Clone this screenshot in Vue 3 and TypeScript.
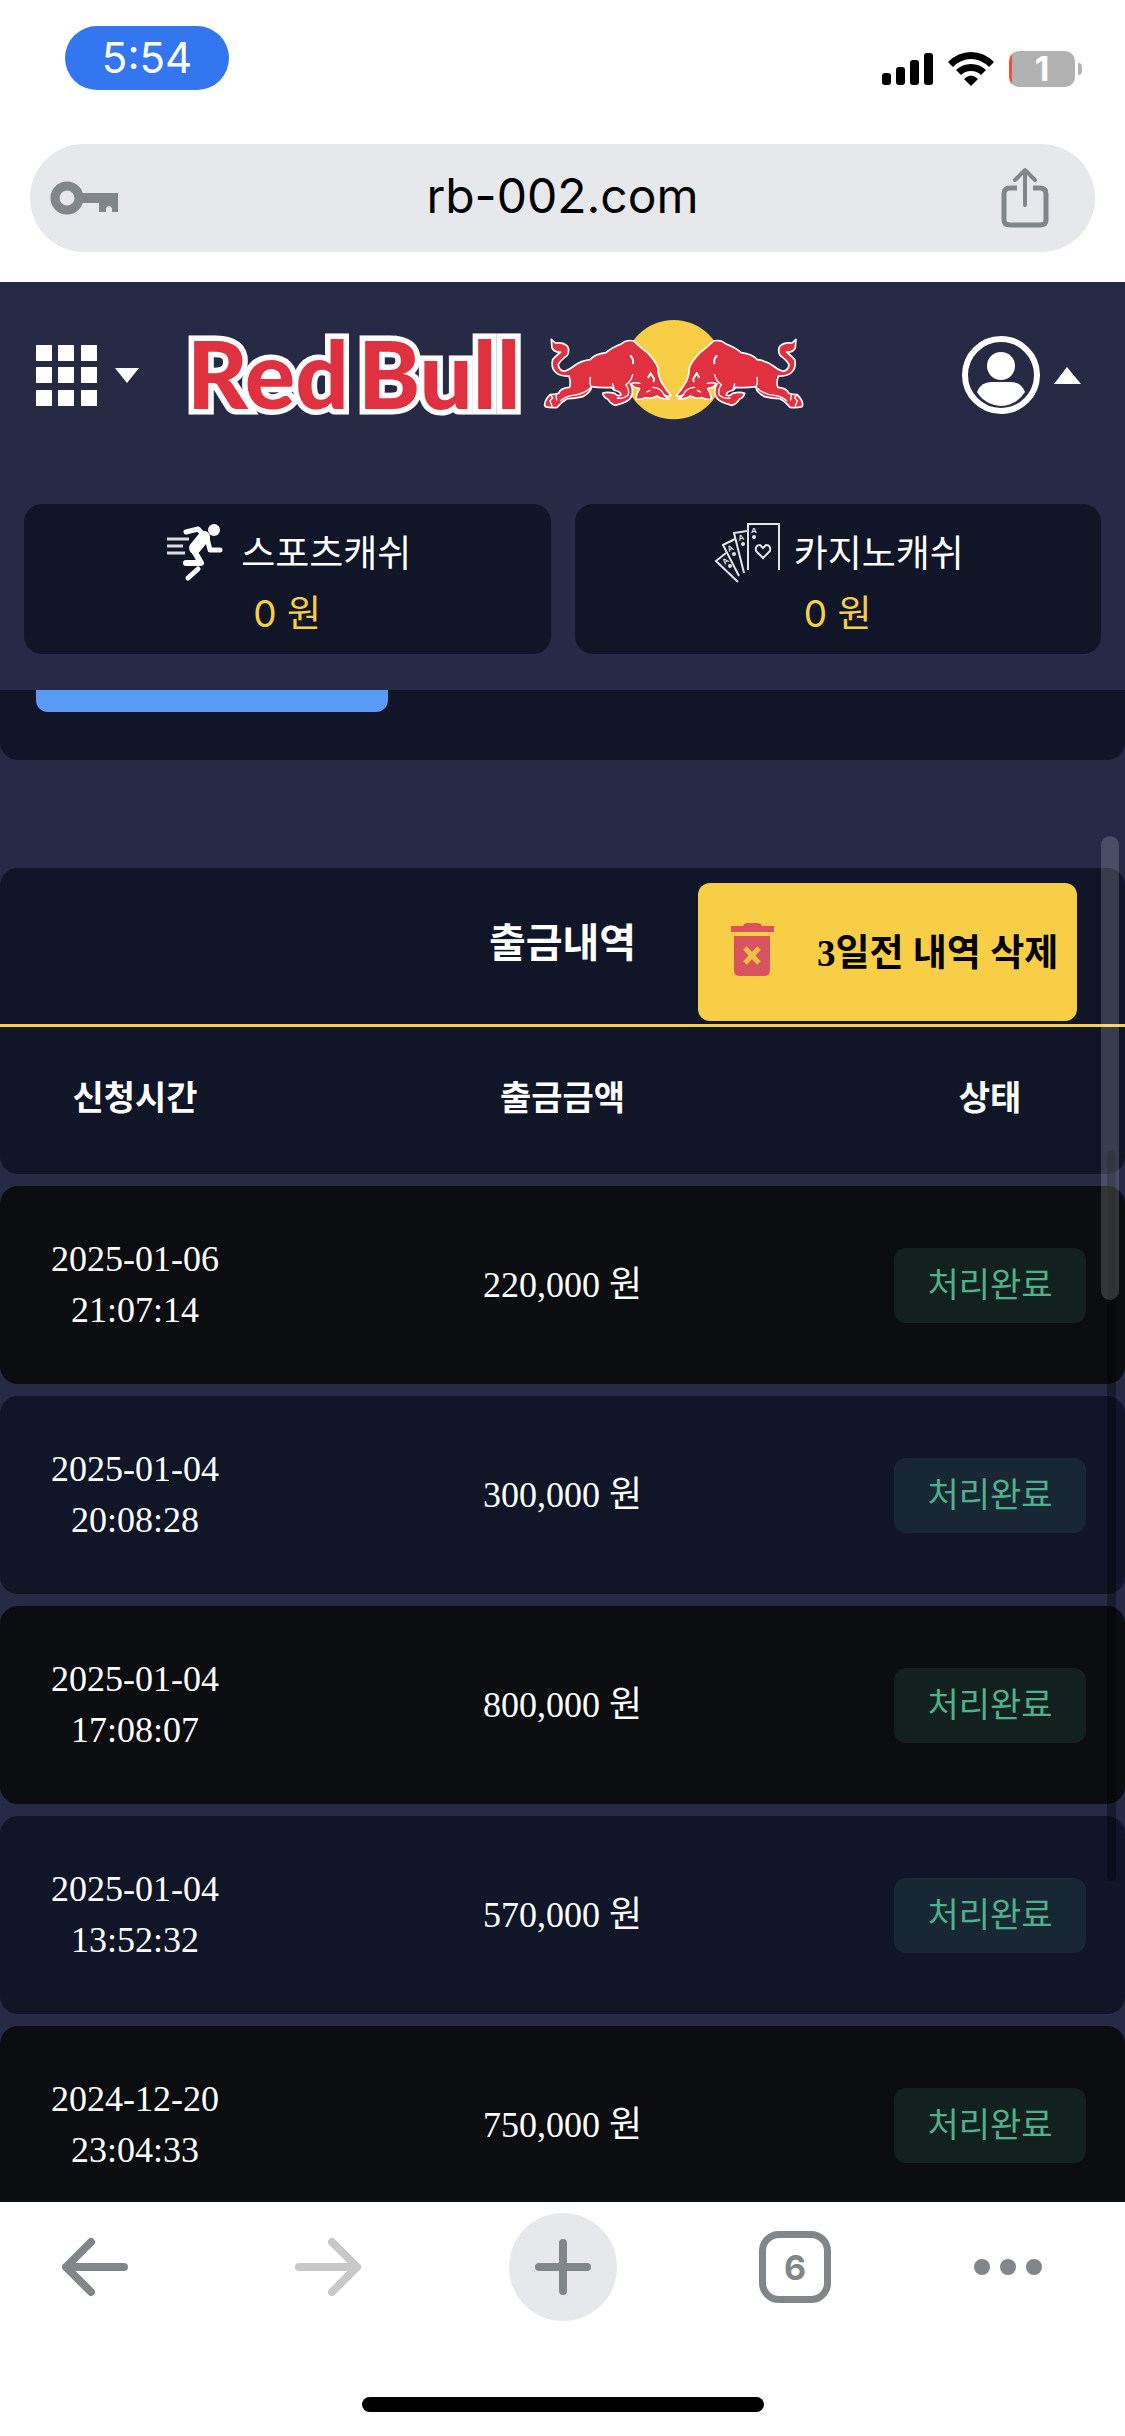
<script setup lang="ts">
interface Withdrawal {
  date: string
  time: string
  amount: string
  status: string
}

const url = 'rb-002.com'
const openTabs = 6
const battery = 1

const withdrawals: Withdrawal[] = [
  { date: '2025-01-06', time: '21:07:14', amount: '220,000 원', status: '처리완료' },
  { date: '2025-01-04', time: '20:08:28', amount: '300,000 원', status: '처리완료' },
  { date: '2025-01-04', time: '17:08:07', amount: '800,000 원', status: '처리완료' },
  { date: '2025-01-04', time: '13:52:32', amount: '570,000 원', status: '처리완료' },
  { date: '2024-12-20', time: '23:04:33', amount: '750,000 원', status: '처리완료' },
]

const bullBody =
  'M64 118 L76 129 Q100 126 112 138 Q120 150 112 166 Q92 180 85 194 Q86 212 104 214 Q120 208 132 198 Q150 183 180 179 Q195 162 228 158 Q246 142 275 131 Q290 118 311 123 Q326 138 352 158 Q376 182 384 204 Q384 232 398 252 Q406 268 423 286 Q414 293 402 284 Q408 292 417 297 Q392 298 381 288 Q366 298 346 293 Q330 300 319 297 Q317 286 329 266 L314 262 L302 252 Q312 272 304 290 Q298 306 256 316 Q242 312 234 298 Q222 294 218 280 Q232 274 254 280 Q262 290 272 286 Q276 276 252 270 Q246 266 246 262 Q214 264 184 260 Q184 276 158 290 Q130 297 112 296 Q96 304 82 322 Q62 324 46 320 Q38 308 60 284 Q76 284 86 280 Q90 264 118 262 Q124 252 117 228 Q90 230 76 216 Q62 202 68 178 Q78 168 92 156 Q74 158 66 144 Z'
</script>

<template>
  <div class="phone">
    <header class="status">
      <span class="clock">5:54</span>
      <div class="signals">
        <svg width="52" height="32" viewBox="0 0 52 32" aria-hidden="true">
          <rect x="0" y="20" width="9" height="12" rx="3" />
          <rect x="14" y="14" width="9" height="18" rx="3" />
          <rect x="28" y="7" width="9" height="25" rx="3" />
          <rect x="42" y="0" width="9" height="32" rx="3" />
        </svg>
        <svg class="wifi" width="46" height="34" viewBox="0 0 46 34" aria-hidden="true">
          <path d="M0 10 Q10 0 23 0 Q36 0 46 10 L41 15 Q33 7 23 7 Q13 7 5 15Z" />
          <path d="M8 18 Q14 12 23 12 Q32 12 38 18 L33 23 Q29 19 23 19 Q17 19 13 23Z" />
          <path d="M16 27 Q23 20 30 27 L23 34Z" />
        </svg>
        <div class="battery">{{ battery }}</div>
        <span class="nub"></span>
      </div>
    </header>

    <div class="address">
      <button class="key" aria-label="비밀번호">
        <svg width="68" height="34" viewBox="0 0 68 34" aria-hidden="true">
          <circle cx="17" cy="17" r="12" fill="none" stroke="#81868a" stroke-width="9" />
          <path d="M32 12H68V31H62V27Q59 23 56 27V31H49V22H32Z" fill="#81868a" />
        </svg>
      </button>
      <input class="url" type="text" :value="url" aria-label="주소" readonly />
      <button class="share" aria-label="공유">
        <svg width="48" height="62" viewBox="0 0 48 62" fill="none" stroke="#81868a" stroke-width="5" aria-hidden="true">
          <path d="M16 21H9Q3 21 3 27V53Q3 58 9 58H39Q45 58 45 53V27Q45 21 39 21H32" />
          <path d="M24 38V3M14 13L24 3L34 13" stroke-width="4" stroke-linecap="round" stroke-linejoin="round" />
        </svg>
      </button>
    </div>

    <main class="page">
      <div class="masthead">
        <nav class="topbar">
          <button class="menu" aria-label="메뉴">
            <svg width="61" height="61" viewBox="0 0 61 61" fill="#fff" aria-hidden="true">
              <path d="M0 0h16v16H0zM22 0h16v16H22zM45 0h16v16H45zM0 22h16v16H0zM22 22h16v16H22zM45 22h16v16H45zM0 45h16v16H0zM22 45h16v16H22zM45 45h16v16H45z" />
            </svg>
            <svg width="24" height="15" viewBox="0 0 24 15" aria-hidden="true"><path d="M0 0H24L12 15Z" fill="#fff" /></svg>
          </button>
          <a class="logo" href="#" aria-label="Red Bull">
            <svg width="624" height="138" viewBox="184 306 624 138" aria-hidden="true">
              <g class="wordmark">
                <text x="187" y="409">Red</text>
                <text x="358" y="409">Bull</text>
              </g>
              <g transform="translate(530 300) scale(.3333)">
                <circle cx="431" cy="209" r="149" fill="#f8ce46" />
                <g v-for="side in 2" :key="side" :transform="side === 1 ? '' : 'translate(862 0) scale(-1 1)'">
                  <path :d="bullBody" fill="#e03141" stroke="#fff" stroke-width="5" stroke-linejoin="round" />
                  <g fill="none" stroke="#fff" stroke-width="4" stroke-linecap="round">
                    <path d="M302 168Q311 176 309 190" stroke-width="6" />
                    <path d="M181 232Q178 250 184 262Q160 284 128 286Q104 290 92 302" />
                    <path d="M308 224Q304 244 288 254Q300 272 294 286Q280 298 262 294" />
                    <path d="M300 252Q314 246 330 250M248 252L254 272" />
                    <path d="M355 232L362 220L372 236L371 244" stroke-width="6" />
                    <path d="M350 276L360 271M368 262Q392 262 402 284" />
                    <path d="M62 284L68 294L60 302L66 318M78 284L80 300" />
                  </g>
                </g>
              </g>
            </svg>
          </a>
          <button class="account" aria-label="내 정보">
            <svg width="80" height="80" viewBox="0 0 80 80" fill="#fff" aria-hidden="true">
              <circle cx="40" cy="40" r="36" fill="none" stroke="#fff" stroke-width="6" />
              <circle cx="40" cy="31" r="14" />
              <path d="M16 57Q20 47 30 47H50Q60 47 64 57Q56 70 40 71Q24 70 16 57Z" />
            </svg>
            <svg width="27" height="17" viewBox="0 0 27 17" aria-hidden="true"><path d="M13 0L27 17H0Z" fill="#fff" /></svg>
          </button>
        </nav>

        <section class="wallets">
          <div class="wallet">
            <div class="wallet-name">
              <svg width="64" height="64" viewBox="164 522 64 64" fill="none" stroke="#fff" stroke-linecap="round" stroke-linejoin="round" aria-hidden="true">
                <circle cx="215" cy="530" r="6" fill="#fff" stroke="none" />
                <path d="M187 532L199 529L208 538L211 550H221" stroke-width="5" />
                <path d="M205 537L196 548" stroke-width="12" />
                <path d="M194 549L202 563H187" stroke-width="6" />
                <path d="M199 569L189 578" stroke-width="5" />
                <path d="M168 539H190M168 546H184M168 553H186" stroke-width="3" stroke-linecap="butt" opacity=".85" />
              </svg>
              <span>스포츠캐쉬</span>
            </div>
            <strong>0 원</strong>
          </div>
          <div class="wallet">
            <div class="wallet-name">
              <svg width="68" height="64" viewBox="712 522 68 64" fill="none" stroke="#e4e5e8" stroke-width="2" aria-hidden="true">
                <path d="M748 570V524H779V570" />
                <path d="M747 531L734 533L744 573" />
                <path d="M735 539L723 545L739 576" />
                <path d="M726 553L716 561L738 582" />
                <path d="M763 558L756 551Q755 545 760 545L763 548L766 545Q771 545 770 551Z" />
                <g fill="#e4e5e8" stroke="none" class="ace">
                  <text x="751" y="533">A</text>
                  <text x="739" y="541" transform="rotate(-15 739 541)">A</text>
                  <text x="729" y="552" transform="rotate(-28 729 552)">A</text>
                  <text x="725" y="565" transform="rotate(-42 725 565)">A</text>
                  <circle cx="754" cy="537" r="2" />
                  <circle cx="743" cy="544" r="2" />
                  <circle cx="734" cy="554" r="2" />
                  <circle cx="730" cy="566" r="2" />
                </g>
              </svg>
              <span>카지노캐쉬</span>
            </div>
            <strong>0 원</strong>
          </div>
        </section>
      </div>

      <section class="request">
        <button class="submit" aria-label="신청"></button>
      </section>

      <section class="history">
        <div class="caption">
          <h2>출금내역</h2>
          <button class="purge">
            <svg width="43" height="54" viewBox="0 0 43 54" aria-hidden="true">
              <path d="M0 3H12Q13 0 17 0H26Q30 0 31 3H43V9H0ZM3 13H39V47Q39 53 33 53H9Q3 53 3 47Z" fill="#d9535f" />
              <path d="M14 25L28 40M28 25L14 40" stroke="#f2c145" stroke-width="5" />
            </svg>
            <span>3일전 내역 삭제</span>
          </button>
        </div>
        <table>
          <thead>
            <tr>
              <th scope="col">신청시간</th>
              <th scope="col">출금금액</th>
              <th scope="col">상태</th>
            </tr>
          </thead>
          <tbody>
            <tr v-for="row in withdrawals" :key="row.date + row.time">
              <td>{{ row.date }}<br />{{ row.time }}</td>
              <td>{{ row.amount }}</td>
              <td><span class="badge">{{ row.status }}</span></td>
            </tr>
          </tbody>
        </table>
      </section>

      <span class="scroll-inner"></span>
      <span class="scroll-outer"></span>
    </main>

    <footer class="browser">
      <nav class="tools">
        <button aria-label="뒤로">
          <svg width="68" height="60" viewBox="0 0 68 60" class="stroke"><path d="M63 30H5M30 5L5 30L30 55" /></svg>
        </button>
        <button aria-label="앞으로" disabled>
          <svg width="68" height="60" viewBox="0 0 68 60" class="stroke faint"><path d="M5 30H63M38 5L63 30L38 55" /></svg>
        </button>
        <button class="add" aria-label="새 탭">
          <svg width="56" height="56" viewBox="0 0 56 56" class="stroke"><path d="M28 4V52M4 28H52" /></svg>
        </button>
        <button class="tabs" aria-label="탭">{{ openTabs }}</button>
        <button aria-label="더보기">
          <svg width="68" height="16" viewBox="0 0 68 16" fill="#81868a">
            <circle cx="8" cy="8" r="8" /><circle cx="34" cy="8" r="8" /><circle cx="60" cy="8" r="8" />
          </svg>
        </button>
      </nav>
      <div class="home"></div>
    </footer>
  </div>
</template>

<style>
body {
  margin: 0;
}
</style>

<style scoped>
* {
  box-sizing: border-box;
}
button {
  display: flex;
  align-items: center;
  justify-content: center;
  padding: 0;
  border: 0;
  background: none;
  font: inherit;
  color: inherit;
}
svg {
  display: block;
  flex: none;
}
.phone {
  display: flex;
  flex-direction: column;
  height: 100vh;
  overflow: hidden;
  background: #fff;
  font-family: Inter, "Noto Sans CJK KR", sans-serif;
}
.status {
  flex: none;
  display: flex;
  justify-content: space-between;
  align-items: flex-start;
  height: 144px;
  padding: 26px 43px 0 65px;
}
.clock {
  width: 164px;
  border-radius: 32px;
  background: #3376f0;
  color: #fff;
  font-size: 42px;
  line-height: 64px;
  text-align: center;
}
.signals {
  display: flex;
  align-items: center;
  padding-top: 25px;
}
.wifi {
  margin: 0 15px 0 14px;
}
.battery {
  width: 66px;
  border-radius: 10px;
  background: linear-gradient(90deg, #ef5138 3px, #b1b1b1 3px);
  color: #fff;
  font-size: 34px;
  font-weight: 700;
  line-height: 36px;
  text-align: center;
}
.nub {
  width: 4px;
  height: 12px;
  margin-left: 3px;
  border-radius: 0 4px 4px 0;
  background: #b1b1b1;
}
.address {
  flex: none;
  display: flex;
  align-items: center;
  height: 108px;
  margin: 0 30px 30px;
  padding: 0 40px 0 20px;
  border-radius: 54px;
  background: #e7e8eb;
}
.key {
  width: 80px;
  justify-content: flex-start;
}
.share {
  width: 60px;
}
.url {
  flex: 1;
  min-width: 0;
  padding: 0 0 4px;
  border: 0;
  outline: 0;
  background: none;
  color: #000;
  font: 48px/60px Inter, sans-serif;
  text-align: center;
}
.page {
  position: relative;
  flex: 1;
  min-height: 0;
  overflow: hidden;
  background: #262a45;
  color: #fff;
}
.topbar {
  display: flex;
  align-items: center;
  height: 186px;
  padding: 0 44px 0 36px;
}
.menu,
.account {
  gap: 18px;
}
.account {
  gap: 13px;
  margin-left: auto;
}
.logo {
  margin-left: 45px;
}
.wordmark {
  fill: #e03141;
  stroke: #fff;
  stroke-width: 11px;
  paint-order: stroke;
  font: 900 94px Lato, sans-serif;
}
.wallets {
  display: flex;
  gap: 24px;
  padding: 36px 24px;
}
.wallet {
  flex: 1;
  display: flex;
  flex-direction: column;
  align-items: center;
  height: 150px;
  padding-top: 18px;
  border-radius: 18px;
  background: #101528;
}
.wallet-name {
  display: flex;
  align-items: center;
  gap: 14px;
  font-size: 37px;
  line-height: 64px;
}
.wallet strong {
  color: #f8ce46;
  font-size: 37px;
  font-weight: 400;
  line-height: 56px;
}
.ace {
  font: 700 8px "Liberation Sans", sans-serif;
}
.request {
  height: 70px;
  margin-bottom: 108px;
  padding-left: 36px;
  border-radius: 0 0 18px 18px;
  background: #101528;
}
.submit {
  width: 352px;
  height: 22px;
  border-radius: 0 0 12px 12px;
  background: #5a9bf8;
}
.history {
  font-family: "Liberation Serif", "Noto Sans CJK KR", serif;
}
.caption {
  display: grid;
  grid-template-columns: 1fr auto 1fr;
  align-items: center;
  border-bottom: 3px solid #f8ce46;
  border-radius: 18px 18px 0 0;
  background: #101528;
}
.caption h2 {
  grid-column: 2;
  margin: 0;
  padding-bottom: 4px;
  font-size: 40px;
  line-height: 60px;
  font-weight: 700;
}
.purge {
  justify-self: end;
  justify-content: flex-start;
  gap: 43px;
  width: 379px;
  height: 138px;
  margin: 15px 48px 3px 0;
  padding: 0 0 4px 33px;
  border-radius: 12px;
  background: #f8ce46;
  color: #000;
  font-size: 37px;
  font-weight: 700;
  white-space: nowrap;
}
table,
thead {
  display: block;
}
tbody {
  display: flex;
  flex-direction: column;
  gap: 12px;
  margin-top: 12px;
}
tr {
  display: grid;
  grid-template-columns: 24% 52% 24%;
  align-items: center;
  justify-items: center;
  height: 198px;
  border-radius: 18px;
  background: #101528;
}
tbody tr:nth-child(odd) {
  background: #0b0d10;
}
thead tr {
  height: 147px;
  padding-bottom: 50px;
  border-radius: 0 0 18px 18px;
  align-items: end;
}
th {
  padding: 0;
  font-size: 34px;
  line-height: 50px;
  font-weight: 700;
}
td {
  padding: 0;
  font-size: 36px;
  line-height: 51px;
  text-align: center;
}
.badge {
  display: block;
  width: 192px;
  border-radius: 12px;
  background: rgba(76, 175, 135, 0.12);
  color: #4fb18a;
  font-size: 34px;
  line-height: 75px;
}
.scroll-outer,
.scroll-inner {
  position: absolute;
  border-radius: 9px;
}
.scroll-outer {
  top: 554px;
  right: 6px;
  width: 18px;
  height: 464px;
  background: rgba(255, 255, 255, 0.17);
}
.scroll-inner {
  top: 869px;
  right: 9px;
  width: 9px;
  height: 730px;
  background: rgba(0, 0, 0, 0.35);
}
.browser {
  flex: none;
  height: 234px;
  padding-top: 11px;
}
.tools {
  display: grid;
  grid-template-columns: 190fr 276fr 194fr 270fr 156fr 39fr;
  align-items: center;
  justify-items: center;
  height: 108px;
}
.stroke {
  fill: none;
  stroke: #81868a;
  stroke-width: 8px;
  stroke-linecap: round;
  stroke-linejoin: round;
}
.faint {
  stroke: #c8c8c8;
}
.add {
  width: 108px;
  height: 108px;
  border-radius: 50%;
  background: #e7e8eb;
}
.tabs {
  width: 72px;
  height: 72px;
  border: 7px solid #81868a;
  border-radius: 20px;
  color: #81868a;
  font-size: 34px;
  font-weight: 700;
}
.home {
  width: 402px;
  height: 15px;
  margin: 76px auto 0;
  border-radius: 8px;
  background: #000;
}
</style>
